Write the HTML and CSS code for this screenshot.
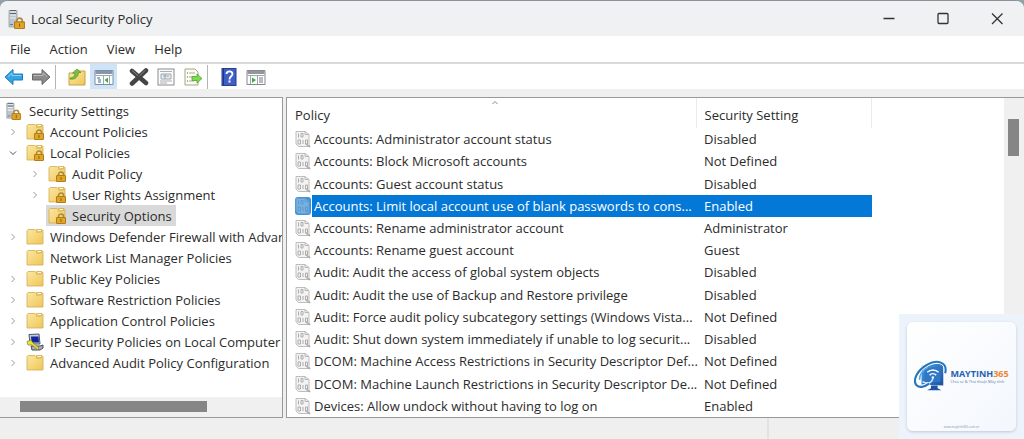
FILE: index.html
```html
<!DOCTYPE html>
<html lang="en">
<head>
    <meta charset="UTF-8">
    <meta name="viewport" content="width=device-width, initial-scale=1.0">
    <title>Local Security Policy</title>
    <link rel="stylesheet" href="styles.css">
</head>
<body>
    <!-- Shared icons -->
    <svg class="icon-defs" aria-hidden="true">
        <linearGradient id="gold" x1="0" y1="0" x2="1" y2="1">
            <stop offset="0" stop-color="#fbe7a0"></stop>
            <stop offset="1" stop-color="#efc657"></stop>
        </linearGradient>
        <linearGradient id="blue" x1="0" y1="0" x2="1" y2="1">
            <stop offset="0" stop-color="#4aa3e8"></stop>
            <stop offset="1" stop-color="#1c4f9c"></stop>
        </linearGradient>
        <symbol id="lock" viewBox="0 0 10 11">
            <path d="M2.5 5V3.5a2.5 2.5 0 0 1 5 0V5" fill="none" stroke="#a98a3c" stroke-width="1.5"></path>
            <rect x="0.5" y="4.5" width="9" height="6" rx="0.5" fill="#e0a526" stroke="#b07c18"></rect>
            <path d="M5 6v3" stroke="#8d6210"></path>
        </symbol>
        <symbol id="folder" viewBox="0 0 18 18">
            <path d="M1 2.500 2 1.500h7l1.500 1.500V1.500h5.500l1 1V16H1z" fill="url(#gold)" stroke="#d3ac50" stroke-width="0.8"></path>
            <path d="M10 4h5l1-2" fill="none" stroke="#c9a24a" stroke-width="0.8"></path>
            <path d="M12 2.500h3" stroke="#fffbe8"></path>
        </symbol>
        <symbol id="folder-lock" viewBox="0 0 18 18">
            <use href="#folder"></use>
            <use href="#lock" x="8" y="6" width="10" height="11"></use>
        </symbol>
        <symbol id="server" viewBox="0 0 18 20">
            <path d="M1 1.500h8V18H1z" fill="#bcc5cd" stroke="#98a2aa" stroke-width="0.8"></path>
            <path d="M2 3h6M2 6h6M2 9h6" stroke="#eef2f5" stroke-width="1.200"></path>
            <path d="M2 1.500h6M2 4.500h6" stroke="#59636b"></path>
            <path d="M2 15.500h3" stroke="#6d7880"></path>
            <use href="#lock" x="6" y="8" width="11" height="12"></use>
        </symbol>
        <symbol id="ipsec" viewBox="0 0 18 18">
            <path d="M3 1.500 13 1l1 10H4z" fill="#c9ccd6" stroke="#4d5270"></path>
            <path d="M5 3.500h7.500l.5 6H5.500z" fill="#14249c"></path>
            <path d="M5 13h9l3-1v3l-3 2H6z" fill="#a9aeb8" stroke="#4a5062"></path>
            <path d="M1 8.500 5 7l2 3 6 5-1.500 1.500L6 12H2z" fill="#e9e435" stroke="#83831c" stroke-width="0.7"></path>
        </symbol>
        <symbol id="policy" viewBox="0 0 16 18">
            <path class="page" d="M1 1.500h9l4 3v10l1 2H3.500L1 14z" fill="#f3f3f3" stroke="#bdbdbd"></path>
            <path d="M10 1.500v3h4" fill="none" stroke="#b8b8b8"></path>
            <path d="M3.500 3.500v4M6 3.500h2V7H6zM3 10h2.500v4H3zM8 10v4M10.500 10h2v4h-2z" fill="none" stroke="#acacac"></path>
            <path d="m11 14 4 3" stroke="#a9a9a9" stroke-width="1.500"></path>
        </symbol>
        <symbol id="chevron" viewBox="0 0 8 8">
            <path d="m2.500 1 3 3-3 3" fill="none" stroke="#999"></path>
        </symbol>
    </svg>

    <div class="window">
        <!-- Title Bar -->
        <header class="title-bar">
            <svg class="app-icon" aria-hidden="true"><use href="#server"></use></svg>
            <h1>Local Security Policy</h1>
            <div class="window-controls">
                <button type="button" aria-label="Minimize">
                    <svg viewBox="0 0 12 12"><path d="M0.500 5.500h11"></path></svg>
                </button>
                <button type="button" aria-label="Maximize">
                    <svg viewBox="0 0 12 12"><rect x="1" y="0.500" width="10" height="10" rx="1"></rect></svg>
                </button>
                <button type="button" aria-label="Close">
                    <svg viewBox="0 0 12 12"><path d="m1 0.500 10.500 10.500M11.500 0.500 1 11"></path></svg>
                </button>
            </div>
        </header>

        <!-- Menu -->
        <nav class="menu-bar">
            <button type="button">File</button>
            <button type="button">Action</button>
            <button type="button">View</button>
            <button type="button">Help</button>
        </nav>

        <!-- Toolbar -->
        <div class="toolbar">
            <button type="button" aria-label="Back">
                <svg viewBox="0 0 20 18"><path d="M1 9 9 1.500V6h9.500v6H9v4.500z" fill="#36a5e6" stroke="#1d78b8"></path><path d="M4 8.500 8 5v2.500h9.500" fill="none" stroke="#8fd2f7"></path></svg>
            </button>
            <button type="button" aria-label="Forward">
                <svg viewBox="0 0 20 18"><path d="M19 9 11 1.500V6H1.500v6H11v4.500z" fill="#8b8b8b" stroke="#666"></path><path d="M2.500 7.500H12V5l4 3.500" fill="none" stroke="#b9b9b9"></path></svg>
            </button>
            <span class="separator"></span>
            <button type="button" aria-label="Up One Level">
                <svg viewBox="0 0 20 18"><path d="M2 5h6l2-2h8v14H2z" fill="url(#gold)" stroke="#c9a040"></path><path d="M3 10c3 0 5-2 5-5H5.500L10 1l4 3.500h-2.500C11 9 8 12 3 11z" fill="#7ac143" stroke="#4f9427" stroke-width="0.7"></path></svg>
            </button>
            <button type="button" class="active" aria-label="Show Console Tree">
                <svg viewBox="0 0 20 18"><path d="M1 2.500h18v14H1z" fill="#fff" stroke="#7e8da0"></path><path d="M1.500 3h17v3h-17z" fill="#8797ab"></path><path d="M1.500 7.500h17M9.500 8v8M15.500 8v8" stroke="#9aa8b8"></path><path d="M3 10h3M4 12h3M4 14h3" stroke="#49698e"></path><path d="m14 9.500-3.500 2.500 3.500 3z" fill="#3eae3e"></path></svg>
            </button>
            <button type="button" class="spaced" aria-label="Delete">
                <svg viewBox="0 0 20 18"><path d="m3 3 14 12M17 2.500 3 15.500" stroke="#454545" stroke-width="4.500" stroke-linecap="round"></path><path d="m3 2.500 6 5M16 2.500l-5 5" stroke="#888"></path></svg>
            </button>
            <button type="button" aria-label="Properties">
                <svg viewBox="0 0 20 18"><rect x="2" y="1" width="16" height="16" fill="#fbfbfb" stroke="#8c8c8c"></rect><path d="M4 3.500h12M4 13h12M4 15h7" stroke="#a9b1b8"></path><path d="M5 6h10v5H5z" fill="#e5edf2" stroke="#9ba6ae"></path><path d="M7 8h6M9 6v5" stroke="#9ba6ae"></path></svg>
            </button>
            <button type="button" aria-label="Export List">
                <svg viewBox="0 0 20 18"><path d="M2 1h10l3 3v13H2z" fill="#fdfdf0" stroke="#a6a38c"></path><path d="M4 5h1M4 9h1M4 13h1" stroke="#555"></path><path d="M6 5h6M6 9h5M6 13h5" stroke="#a8a8a8"></path><path d="M9 8.500h5V6l5 4.500-5 4.500v-2.500H9z" fill="#7ed957" stroke="#4fa52c" stroke-width="0.8"></path></svg>
            </button>
            <span class="separator"></span>
            <button type="button" aria-label="Help">
                <svg viewBox="0 0 20 18"><rect x="3" y="0.500" width="14" height="17" fill="#3f5fc4" stroke="#263f95"></rect><path d="M4.500 1v16" stroke="#203684"></path><path d="M7.500 6c0-3.500 6-3.500 6 0 0 2.500-3 2-3 5.500" fill="none" stroke="#fff" stroke-width="1.800"></path><path d="M9.500 13.500h2" stroke="#fff" stroke-width="2"></path></svg>
            </button>
            <button type="button" aria-label="Show Action Pane">
                <svg viewBox="0 0 20 18"><path d="M1 2.500h18v14H1z" fill="#fff" stroke="#85888c"></path><path d="M1.500 3h17v3h-17z" fill="#92979d"></path><path d="M1.500 7.500h17M4.500 8v8M11.500 8v8" stroke="#a2a6aa"></path><path d="M13 10h4M13 12h4M13 14h4" stroke="#6e7b88"></path><path d="m6 9.500 4 2.500-4 3z" fill="#3eae3e"></path></svg>
            </button>
        </div>

        <!-- Tree and policy list -->
        <main class="panes">
            <section class="tree-pane">
                <ul class="tree">
                    <li><div class="node root"><svg class="icon" aria-hidden="true"><use href="#server"></use></svg><span>Security Settings</span></div>
                        <ul>
                            <li><div class="node"><svg class="chevron"><use href="#chevron"></use></svg><svg class="icon"><use href="#folder-lock"></use></svg><span>Account Policies</span></div></li>
                            <li><div class="node"><svg class="chevron open"><use href="#chevron"></use></svg><svg class="icon"><use href="#folder-lock"></use></svg><span>Local Policies</span></div>
                                <ul>
                                    <li><div class="node"><svg class="chevron"><use href="#chevron"></use></svg><svg class="icon"><use href="#folder-lock"></use></svg><span>Audit Policy</span></div></li>
                                    <li><div class="node"><svg class="chevron"><use href="#chevron"></use></svg><svg class="icon"><use href="#folder-lock"></use></svg><span>User Rights Assignment</span></div></li>
                                    <li><div class="node leaf selected"><svg class="icon"><use href="#folder-lock"></use></svg><span>Security Options</span></div></li>
                                </ul>
                            </li>
                            <li><div class="node"><svg class="chevron"><use href="#chevron"></use></svg><svg class="icon"><use href="#folder"></use></svg><span>Windows Defender Firewall with Advanced Security</span></div></li>
                            <li><div class="node leaf"><svg class="icon"><use href="#folder"></use></svg><span>Network List Manager Policies</span></div></li>
                            <li><div class="node"><svg class="chevron"><use href="#chevron"></use></svg><svg class="icon"><use href="#folder"></use></svg><span>Public Key Policies</span></div></li>
                            <li><div class="node"><svg class="chevron"><use href="#chevron"></use></svg><svg class="icon"><use href="#folder"></use></svg><span>Software Restriction Policies</span></div></li>
                            <li><div class="node"><svg class="chevron"><use href="#chevron"></use></svg><svg class="icon"><use href="#folder"></use></svg><span>Application Control Policies</span></div></li>
                            <li><div class="node"><svg class="chevron"><use href="#chevron"></use></svg><svg class="icon"><use href="#ipsec"></use></svg><span>IP Security Policies on Local Computer</span></div></li>
                            <li><div class="node"><svg class="chevron"><use href="#chevron"></use></svg><svg class="icon"><use href="#folder"></use></svg><span>Advanced Audit Policy Configuration</span></div></li>
                        </ul>
                    </li>
                </ul>
                <div class="scroll-x"><div class="thumb"></div></div>
            </section>

            <section class="list-pane">
                <div class="list">
                    <table>
                        <thead>
                            <tr>
                                <th class="col-policy">Policy<svg class="sort" viewBox="0 0 8 5" aria-hidden="true"><path d="m1.500 4 2.500-2.500 2.500 2.500"></path></svg></th>
                                <th class="col-setting">Security Setting</th>
                            </tr>
                        </thead>
                        <tbody>
                            <tr><td><div class="policy"><svg class="icon"><use href="#policy"></use></svg><span>Accounts: Administrator account status</span></div></td><td>Disabled</td></tr>
                            <tr><td><div class="policy"><svg class="icon"><use href="#policy"></use></svg><span>Accounts: Block Microsoft accounts</span></div></td><td>Not Defined</td></tr>
                            <tr><td><div class="policy"><svg class="icon"><use href="#policy"></use></svg><span>Accounts: Guest account status</span></div></td><td>Disabled</td></tr>
                            <tr class="selected"><td><div class="policy"><svg class="icon"><use href="#policy"></use></svg><span>Accounts: Limit local account use of blank passwords to cons...</span></div></td><td>Enabled</td></tr>
                            <tr><td><div class="policy"><svg class="icon"><use href="#policy"></use></svg><span>Accounts: Rename administrator account</span></div></td><td>Administrator</td></tr>
                            <tr><td><div class="policy"><svg class="icon"><use href="#policy"></use></svg><span>Accounts: Rename guest account</span></div></td><td>Guest</td></tr>
                            <tr><td><div class="policy"><svg class="icon"><use href="#policy"></use></svg><span>Audit: Audit the access of global system objects</span></div></td><td>Disabled</td></tr>
                            <tr><td><div class="policy"><svg class="icon"><use href="#policy"></use></svg><span>Audit: Audit the use of Backup and Restore privilege</span></div></td><td>Disabled</td></tr>
                            <tr><td><div class="policy"><svg class="icon"><use href="#policy"></use></svg><span>Audit: Force audit policy subcategory settings (Windows Vista...</span></div></td><td>Not Defined</td></tr>
                            <tr><td><div class="policy"><svg class="icon"><use href="#policy"></use></svg><span>Audit: Shut down system immediately if unable to log securit...</span></div></td><td>Disabled</td></tr>
                            <tr><td><div class="policy"><svg class="icon"><use href="#policy"></use></svg><span>DCOM: Machine Access Restrictions in Security Descriptor Def...</span></div></td><td>Not Defined</td></tr>
                            <tr><td><div class="policy"><svg class="icon"><use href="#policy"></use></svg><span>DCOM: Machine Launch Restrictions in Security Descriptor De...</span></div></td><td>Not Defined</td></tr>
                            <tr><td><div class="policy"><svg class="icon"><use href="#policy"></use></svg><span>Devices: Allow undock without having to log on</span></div></td><td>Enabled</td></tr>
                        </tbody>
                    </table>
                </div>
                <div class="scroll-y"><div class="thumb"></div></div>
            </section>
        </main>

        <footer class="status-bar"><span></span><span></span></footer>
    </div>

    <!-- Site badge over the corner -->
    <div class="badge">
        <div class="badge-card">
            <div class="brand">
                <svg class="brand-logo" viewBox="0 0 36 36" aria-hidden="true">
                    <path d="M8 6 31 3v24L8 26z" fill="url(#blue)"></path>
                    <path d="M11 9 28 7v16l-17 1z" fill="#2f78c8"></path>
                    <path d="M18 27h7v3l4 2H14l4-2z" fill="#1f559f"></path>
                    <path d="M14 13a8.500 8.500 0 0 1 12 0M16.500 16a5 5 0 0 1 7 0" fill="none" stroke="#fff" stroke-width="1.600"></path>
                    <circle cx="20" cy="18.500" r="1.300" fill="#fff"></circle>
                    <path d="M20 19c-1 6-6 7-11 4" fill="none" stroke="#dcefff" stroke-width="1.500"></path>
                    <path d="M33 14C36 2 24-1 14 5 3 11-2 22 3 27c3 3 9 1 13-2" fill="none" stroke="#fff" stroke-width="4"></path>
                    <path d="M33 14C36 2 24-1 14 5 3 11-2 22 3 27c3 3 9 1 13-2" fill="none" stroke="#2874bd" stroke-width="2.200"></path>
                    <path d="M6 21c-1-5 4-11 9-13" fill="none" stroke="#50a7e4" stroke-width="1.500"></path>
                </svg>
                <div class="brand-text">
                    <strong>MAYTINH<em>365</em></strong>
                    <span lang="vi">Chia sẻ &amp; Thủ thuật Máy tính</span>
                </div>
            </div>
            <small>www.maytinh365.com.vn</small>
        </div>
    </div>
</body>
</html>
```
FILE: styles.css
```css
/* General */
* {
    box-sizing: border-box;
}

body {
    margin: 0;
    font-family: "Open Sans", "Noto Sans", sans-serif;
    font-size: 13px;
    color: #2b2b2b;
    background-color: #8fa3ab;
}

ul {
    list-style: none;
    margin: 0;
    padding: 0;
}

button {
    font: inherit;
    color: inherit;
    background: none;
    border: none;
    padding: 0;
}

.icon-defs {
    position: absolute;
    width: 0;
    height: 0;
}

.window {
    display: flex;
    flex-direction: column;
    height: 100vh;
    min-height: 400px;
    border-top: 1px solid #8d9297;
    border-radius: 8px 8px 0 0;
    background-color: #efefef;
    overflow: hidden;
}

/* Title Bar */
.title-bar {
    display: flex;
    align-items: center;
    height: 35px;
    padding-left: 8px;
    background-color: #f0f1f2;
}

.app-icon {
    width: 18px;
    height: 20px;
}

.title-bar h1 {
    flex: 1;
    margin: 0 0 0 5px;
    font-size: 13px;
    font-weight: normal;
}

.window-controls {
    display: flex;
}

.window-controls button {
    display: flex;
    align-items: center;
    justify-content: center;
    width: 54px;
    height: 35px;
}

.window-controls svg {
    width: 12px;
    height: 12px;
    fill: none;
    stroke: #333;
    stroke-width: 1.3;
    overflow: visible;
}

/* Menu */
.menu-bar {
    display: flex;
    gap: 19px;
    height: 28px;
    padding-left: 10px;
    background-color: #fff;
    border-bottom: 2px solid #d9d9d9;
}

/* Toolbar */
.toolbar {
    display: flex;
    align-items: center;
    height: 25px;
    background-color: #fff;
}

.toolbar button {
    display: flex;
    align-items: center;
    justify-content: center;
    width: 27px;
    height: 25px;
}

.toolbar button.active {
    background-color: #cfe4f7;
}

.toolbar button.spaced {
    margin-left: 8px;
}

.toolbar svg {
    width: 20px;
    height: 18px;
}

.separator {
    width: 1px;
    height: 24px;
    margin: 0 7px 0 1px;
    background-color: #b5b5b5;
}

/* Panes */
.panes {
    flex: 1;
    display: flex;
    gap: 3px;
    min-height: 0;
    margin-top: 8px;
}

.tree-pane {
    display: flex;
    flex-direction: column;
    width: 283px;
    background-color: #fff;
    border: 1px solid #999;
    border-left: none;
    overflow: hidden;
}

/* Tree */
.tree {
    flex: 1;
    padding-top: 2px;
    overflow: hidden;
}

.tree ul ul {
    padding-left: 22px;
}

.node {
    display: flex;
    align-items: center;
    height: 21px;
    padding-left: 9px;
    white-space: nowrap;
}

.node.root {
    padding-left: 5px;
}

.node .icon {
    flex: none;
    width: 18px;
    height: 18px;
    margin-left: 9px;
}

.node.root .icon {
    margin-left: 0;
}

.node span {
    padding-left: 6px;
}

.node.leaf {
    width: max-content;
    margin-left: 24px;
    padding: 0 4px 0 2px;
}

.node.leaf .icon {
    margin-left: 0;
}

.node.selected {
    background-color: #d9d9d9;
}

.chevron {
    flex: none;
    width: 8px;
    height: 8px;
}

.chevron.open {
    transform: rotate(90deg);
    filter: brightness(0.5);
}

.scroll-x {
    height: 20px;
    padding: 4px 75px 0 20px;
    background-color: #f0f0f0;
}

.scroll-x .thumb {
    height: 11px;
    background-color: #868686;
}

/* Policy list */
.list-pane {
    flex: 1;
    display: flex;
    min-width: 0;
    background-color: #fff;
    border: 1px solid #999;
    border-right: none;
}

.list {
    flex: 1;
    min-width: 0;
}

table {
    width: 585px;
    height: 100%;
    table-layout: fixed;
    border-collapse: collapse;
}

th {
    position: relative;
    height: 30px;
    padding: 3px 8px 0;
    font-weight: normal;
    text-align: left;
    border-right: 1px solid #ececec;
}

.col-policy {
    width: 409px;
}

.sort {
    position: absolute;
    top: 2px;
    left: 50%;
    width: 8px;
    height: 5px;
    fill: none;
    stroke: #888;
}

td {
    padding: 0 0 0 8px;
    line-height: 20px;
    white-space: nowrap;
}

.policy {
    display: flex;
    align-items: center;
}

.policy .icon {
    flex: none;
    width: 16px;
    height: 18px;
}

.policy span {
    flex: 1;
    padding-left: 3px;
}

/* The highlight starts after the icon */
tr.selected td {
    color: #fff;
    background-color: #0478d7;
}

tr.selected td:first-child {
    background: linear-gradient(to right, #fff 25px, #0478d7 25px);
}

tr.selected .icon {
    border-radius: 3px;
    background-color: #3f93dc;
}

tr.selected .icon use {
    opacity: 0.3;
}

.scroll-y {
    width: 20px;
    padding: 21px 5px 0 4px;
    background-color: #f0f0f0;
}

.scroll-y .thumb {
    height: 37px;
    background-color: #868686;
}

/* Status bar */
.status-bar {
    display: flex;
    height: 21px;
}

.status-bar span {
    flex: 1;
}

.status-bar span:first-child {
    flex: 3;
    border-right: 2px solid #e2e2e2;
}

/* Site badge */
.badge {
    position: absolute;
    right: 0;
    bottom: 0;
    width: 125px;
    height: 125px;
    padding: 8px;
    background-color: #edf3fb;
}

.badge-card {
    display: flex;
    flex-direction: column;
    justify-content: space-between;
    align-items: center;
    height: 100%;
    padding: 38px 0 2px;
    border-radius: 6px;
    background: linear-gradient(135deg, #fff, #f3f7fd);
    box-shadow: 0 1px 3px rgba(80, 100, 130, 0.3);
}

.brand {
    display: flex;
    align-items: center;
    gap: 2px;
}

.brand-logo {
    width: 34px;
    height: 34px;
}

.brand-text {
    display: flex;
    flex-direction: column;
    white-space: nowrap;
}

.brand-text strong {
    font-size: 9px;
    line-height: 10px;
    color: #2361ae;
}

.brand-text em {
    font-style: normal;
    color: #ef8432;
}

.brand-text span {
    font-size: 4px;
    line-height: 6px;
    color: #5f7fa8;
}

.badge-card small {
    font-size: 3px;
    color: #8793a3;
}
```
